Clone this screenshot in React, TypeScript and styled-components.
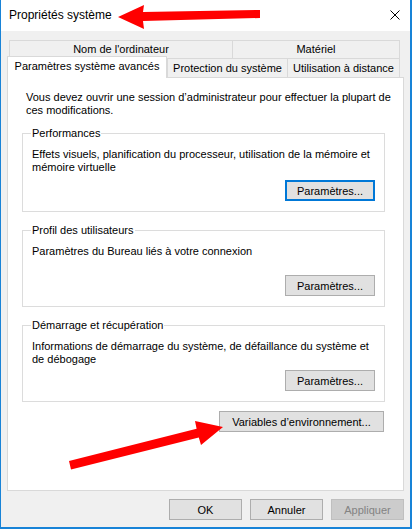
import React from "react";
import styled, { createGlobalStyle, css } from "styled-components";

const Global = createGlobalStyle`
  html, body { margin: 0; padding: 0; background: #ffffff; }
  body { font-family: "Liberation Sans", Arial, sans-serif; }
  * { box-sizing: border-box; }
`;

const Window = styled.div`
  position: relative;
  width: 412px;
  height: 529px;
  display: flex;
  flex-direction: column;
  background: #f0f0f0;
  border-left: 1px solid #1883d7;
  border-right: 2px solid #1883d7;
  border-bottom: 2px solid #1883d7;
  overflow: hidden;
`;

const TitleBar = styled.div`
  height: 31px;
  flex: none;
  background: #ffffff;
  display: flex;
  align-items: center;
  justify-content: space-between;
  padding: 0 10px 0 8px;
`;

const Title = styled.span`
  font-family: "Liberation Sans", Arial, sans-serif;
  font-size: 12px;
  color: #000;
  margin-top: -1px;
`;

const Close = styled.svg`
  width: 10px;
  height: 10px;
  margin-top: -1px;
`;

const Body = styled.div`
  flex: 1;
  display: flex;
  flex-direction: column;
  padding: 9px 6px 0 6px;
`;

const TabStrip = styled.div`
  margin: 0 4px 0 2px;
  display: flex;
  flex-direction: column;
`;

const TabRow = styled.div<{ $h: number }>`
  display: flex;
  align-items: flex-end;
  height: ${(p) => p.$h}px;
`;

const Tab = styled.div<{ $w?: number; $selected?: boolean; $last?: boolean }>`
  font-size: 11px;
  line-height: 13px;
  color: #000;
  display: flex;
  align-items: center;
  justify-content: center;
  white-space: nowrap;
  height: 100%;
  background: #f0f0f0;
  border-top: 1px solid #d9d9d9;
  border-left: 1px solid #d9d9d9;
  ${(p) => (p.$last ? "border-right: 1px solid #d9d9d9;" : "")}
  ${(p) => (p.$w ? `width: ${p.$w}px; flex: none;` : "flex: 1;")}
  ${(p) =>
    p.$selected &&
    css`
      position: relative;
      z-index: 1;
      background: #ffffff;
      border-right: 1px solid #d9d9d9;
      height: 22px;
      margin: -2px 0 -1px -2px;
      padding-bottom: 3px;
    `}
`;

const Panel = styled.div`
  height: 414px;
  flex: none;
  background: #ffffff;
  border: 1px solid #d9d9d9;
  padding: 13px 0 0 14px;
  display: flex;
  flex-direction: column;
`;

const Text = styled.p`
  margin: 0;
  font-size: 11px;
  line-height: 13px;
  color: #000;
`;

const Intro = styled(Text)`
  padding-left: 4px;
  padding-right: 0;
`;

const Group = styled.fieldset<{ $top: number }>`
  margin: ${(p) => p.$top}px 0 0 0;
  padding: 0;
  width: 363px;
  min-width: 0;
  border: 1px solid #dcdcdc;
`;

const Legend = styled.legend`
  margin-left: 8px;
  padding: 0 1px;
  font-size: 11px;
  line-height: 13px;
  color: #000;
`;

const GroupBody = styled.div<{ $h: number }>`
  height: ${(p) => p.$h}px;
  display: flex;
  flex-direction: column;
  padding: 8px 9px 10px 9px;
`;

const Button = styled.button<{ $w: number; $focused?: boolean }>`
  width: ${(p) => p.$w}px;
  height: 21px;
  flex: none;
  padding: 0;
  font-family: "Liberation Sans", Arial, sans-serif;
  font-size: 11px;
  color: #000;
  background: #e1e1e1;
  border: 1px solid #adadad;
  ${(p) =>
    p.$focused &&
    css`
      border: 2px solid #0078d7;
    `}
  &:disabled {
    background: #cccccc;
    border-color: #bfbfbf;
    color: #838383;
  }
`;

const GroupButton = styled(Button)`
  margin-top: auto;
  align-self: flex-end;
`;

const EnvRow = styled.div`
  width: 363px;
  display: flex;
  justify-content: flex-end;
  margin-top: 9px;
  padding-right: 1px;
`;

const Footer = styled.div`
  display: flex;
  justify-content: flex-end;
  gap: 8px;
  margin-top: 8px;
`;

const Annotations = styled.svg`
  position: absolute;
  left: -1px;
  top: 0;
  width: 413px;
  height: 529px;
  pointer-events: none;
  z-index: 5;
`;

export default function App() {
  return (
    <>
      <Global />
      <Window>
        <TitleBar>
          <Title>Propriétés système</Title>
          <Close viewBox="0 0 10 10">
            <path d="M0.5 0.5 L9.5 9.5 M9.5 0.5 L0.5 9.5" stroke="#000" strokeWidth="1" />
          </Close>
        </TitleBar>
        <Body>
          <TabStrip>
            <TabRow $h={18}>
              <Tab $w={223}>Nom de l'ordinateur</Tab>
              <Tab $last>Matériel</Tab>
            </TabRow>
            <TabRow $h={19}>
              <Tab $w={160} $selected>
                Paramètres système avancés
              </Tab>
              <Tab $w={120}>Protection du système</Tab>
              <Tab $last>Utilisation à distance</Tab>
            </TabRow>
          </TabStrip>
          <Panel>
            <Intro>
              Vous devez ouvrir une session d’administrateur pour effectuer la plupart de ces
              modifications.
            </Intro>
            <Group $top={10}>
              <Legend>Performances</Legend>
              <GroupBody $h={71}>
                <Text>
                  Effets visuels, planification du processeur, utilisation de la mémoire et
                  mémoire virtuelle
                </Text>
                <GroupButton $w={90} $focused>
                  Paramètres...
                </GroupButton>
              </GroupBody>
            </Group>
            <Group $top={12}>
              <Legend>Profil des utilisateurs</Legend>
              <GroupBody $h={69}>
                <Text>Paramètres du Bureau liés à votre connexion</Text>
                <GroupButton $w={90}>Paramètres...</GroupButton>
              </GroupBody>
            </Group>
            <Group $top={12}>
              <Legend>Démarrage et récupération</Legend>
              <GroupBody $h={69}>
                <Text>
                  Informations de démarrage du système, de défaillance du système et de
                  débogage
                </Text>
                <GroupButton $w={90}>Paramètres...</GroupButton>
              </GroupBody>
            </Group>
            <EnvRow>
              <Button $w={165}>Variables d’environnement...</Button>
            </EnvRow>
          </Panel>
          <Footer>
            <Button $w={73}>OK</Button>
            <Button $w={73}>Annuler</Button>
            <Button $w={73} disabled>
              Appliquer
            </Button>
          </Footer>
        </Body>
        <Annotations viewBox="0 0 413 529">
          <polygon
            points="118,17 144,5 143,12 260,10 260,18 143,21 144,29"
            fill="#ff0000"
          />
          <polygon
            points="223,427 195,421 196.6,428.7 69,461 71,469.5 198.8,437.5 201,445"
            fill="#ff0000"
          />
        </Annotations>
      </Window>
    </>
  );
}
